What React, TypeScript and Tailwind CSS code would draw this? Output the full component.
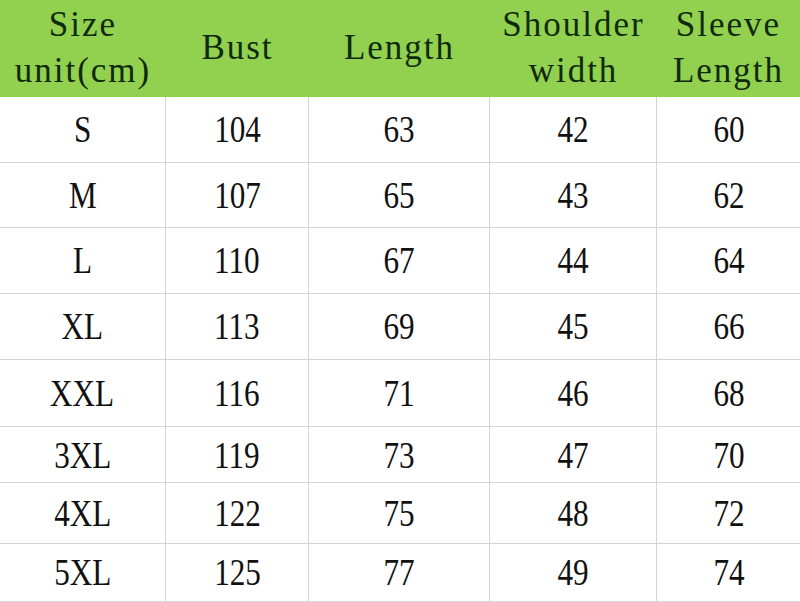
import React from 'react'

const headers = [
  ['Size', 'unit(cm)'],
  ['Bust'],
  ['Length'],
  ['Shoulder', 'width'],
  ['Sleeve', 'Length'],
]

const rows = [
  ['S', '104', '63', '42', '60'],
  ['M', '107', '65', '43', '62'],
  ['L', '110', '67', '44', '64'],
  ['XL', '113', '69', '45', '66'],
  ['XXL', '116', '71', '46', '68'],
  ['3XL', '119', '73', '47', '70'],
  ['4XL', '122', '75', '48', '72'],
  ['5XL', '125', '77', '49', '74'],
]

const heights = ['h-[66px]', 'h-[65px]', 'h-[66px]', 'h-[66px]', 'h-[67px]', 'h-[56px]', 'h-[61px]', 'h-[58px]']

const cols = 'grid grid-cols-[166px_143px_181px_167px_143px]'

const App = () => {
  return (
    <div className="w-[800px] h-[602px] overflow-hidden bg-white">
      <div className={cols + ' h-[97px] bg-[#92d050]'}>
        {headers.map((h, i) => (
          <div key={i} className="flex flex-col items-center justify-center pb-[2px] text-[#0f2a0a]">
            {h.map((line, j) => (
              <span
                key={j}
                className="block whitespace-nowrap text-[35px] leading-[46px] tracking-[2px] font-['Liberation_Serif',serif]"
              >
                {line}
              </span>
            ))}
          </div>
        ))}
      </div>
      {rows.map((r, i) => (
        <div key={i} className={cols + ' ' + heights[i] + ' border-b border-[#d4d4d4]'}>
          {r.map((c, j) => (
            <div
              key={j}
              className={'flex items-center justify-center ' + (j < 4 ? 'border-r border-[#d4d4d4]' : '')}
            >
              <span className="block scale-x-[0.82] text-[38px] text-[#111] font-['Liberation_Serif',serif]">
                {c}
              </span>
            </div>
          ))}
        </div>
      ))}
    </div>
  )
}

export default App
